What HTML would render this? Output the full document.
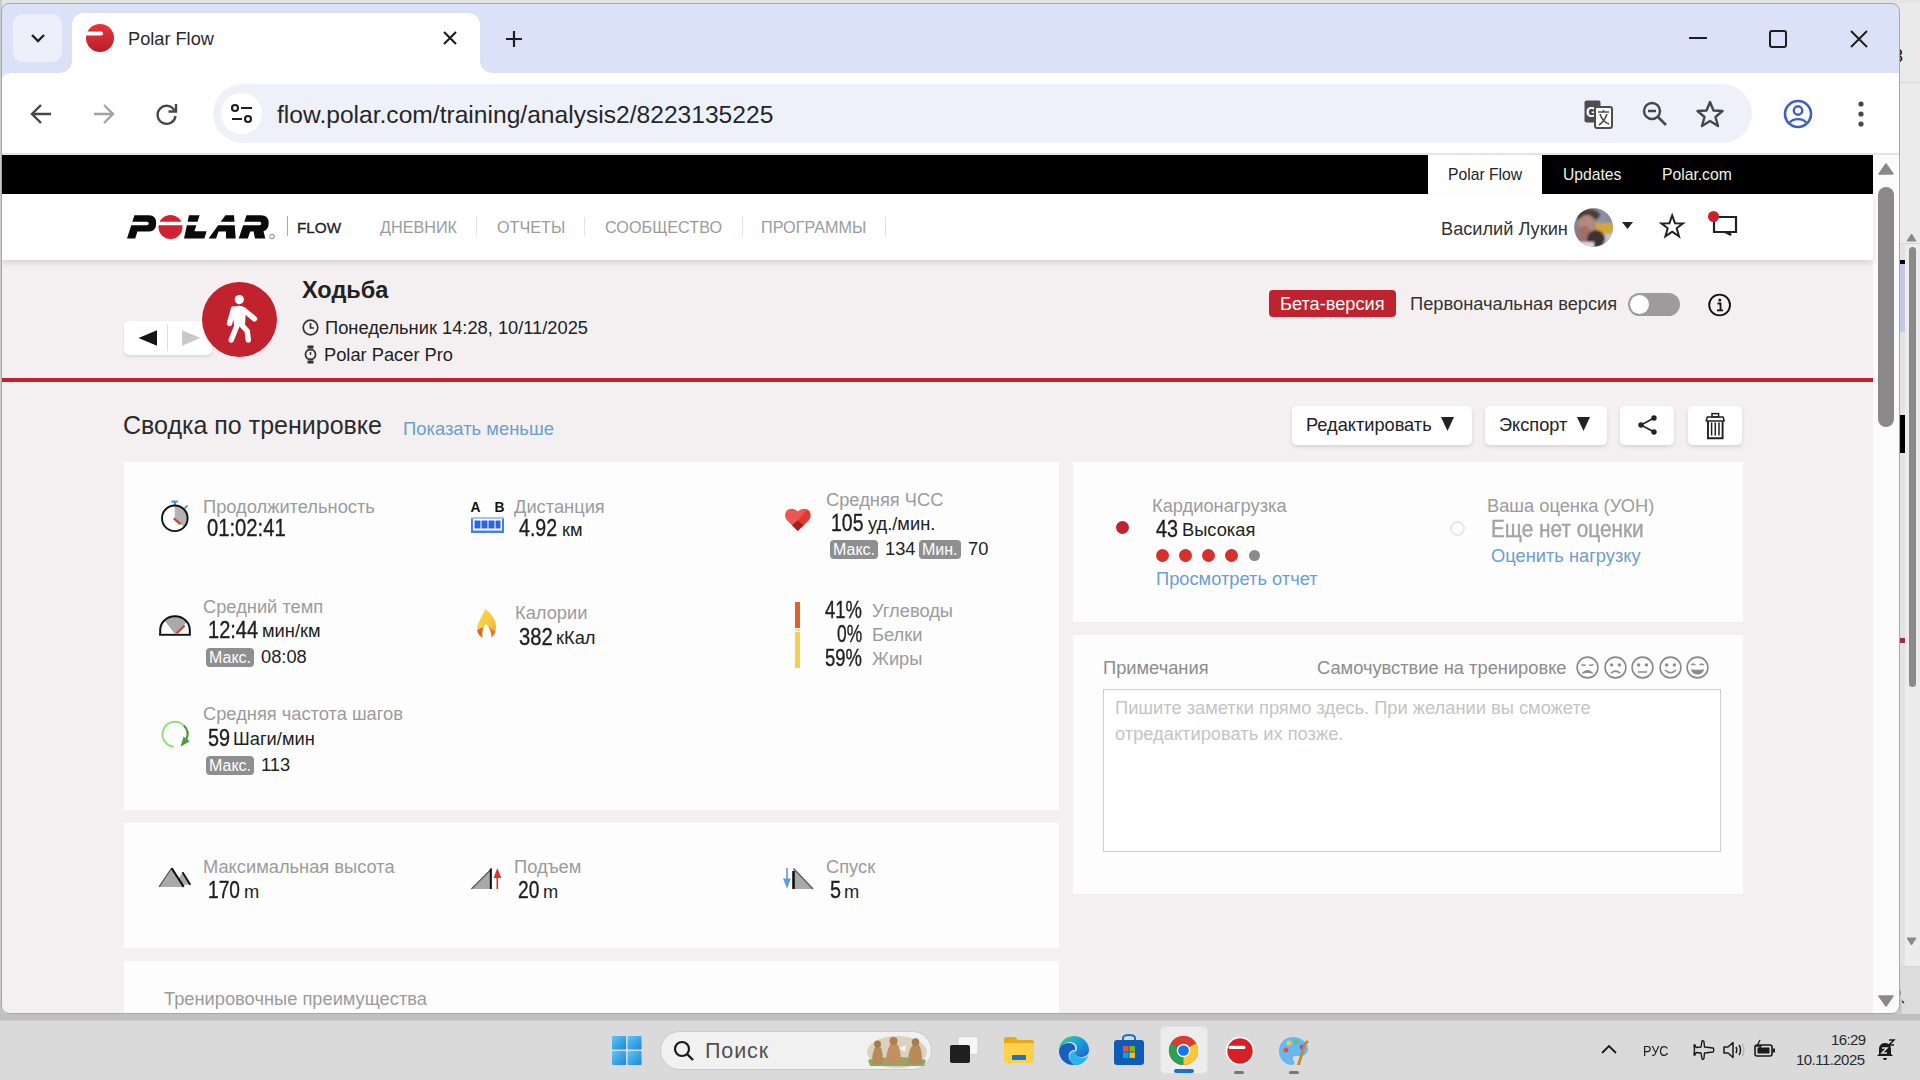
<!DOCTYPE html>
<html><head><meta charset="utf-8">
<style>
*{box-sizing:border-box;margin:0;padding:0}
html,body{width:1920px;height:1080px;overflow:hidden;background:#e8e8e8;font-family:"Liberation Sans",sans-serif}
.a{position:absolute}
.t{position:absolute;white-space:nowrap;line-height:1}
#scr{position:absolute;left:0;top:0;width:1920px;height:1080px;clip-path:inset(3px 21px 66px 1px round 8px)}
.lbl{font-size:18.3px;color:#9b9b9b}
.val{font-size:23.2px;color:#1e1e1e;transform-origin:0 0;transform:scaleX(.92);display:inline-block;-webkit-text-stroke:.35px #1e1e1e}
.unit{font-size:18.3px;color:#222}
.card{position:absolute;background:#fefdfd}
.badge{position:absolute;background:#8f8f8f;color:#fff;border-radius:4px;font-size:16px;line-height:19px;padding:0 3px;white-space:nowrap}
.link{color:#6a9fd0;font-size:18.3px}
svg{position:absolute;overflow:visible}
</style></head><body>
<!-- desktop right strip -->
<div class="a" style="left:1897px;top:0;width:23px;height:1020px;background:#eaeaea"></div>
<div class="a" style="left:1897px;top:82px;width:23px;height:1px;background:#d9d9d9"></div>
<div class="a" style="left:1897px;top:83px;width:23px;height:160px;background:#ebebeb"></div>
<div class="a" style="left:1897px;top:243px;width:23px;height:1px;background:#d5d5d5"></div>
<div class="a" style="left:1897px;top:244px;width:23px;height:722px;background:#e2e2e2"></div>
<div class="a" style="left:1905px;top:244px;width:15px;height:722px;background:#ececec"></div>
<div class="a" style="left:1897px;top:966px;width:23px;height:1px;background:#d5d5d5"></div>
<div class="a" style="left:1897px;top:967px;width:23px;height:53px;background:#dcdcdc"></div>
<svg style="left:1906px;top:233px" width="11" height="9"><path d="M5.5 1L10 8H1Z" fill="#8a8a8a" stroke="#8a8a8a" stroke-linejoin="round"/></svg>
<div class="a" style="left:1909px;top:247px;width:7px;height:440px;border-radius:4px;background:#8a8a8a"></div>
<svg style="left:1906px;top:937px" width="11" height="9"><path d="M1 1H10L5.5 8Z" fill="#8a8a8a" stroke="#8a8a8a" stroke-linejoin="round"/></svg>
<div class="a" style="left:1897px;top:260px;width:8px;height:4px;background:#000"></div>
<div class="a" style="left:1897px;top:264px;width:8px;height:68px;background:#c6c9e6"></div>
<div class="a" style="left:1897px;top:415px;width:8px;height:38px;background:#000"></div>
<div class="a" style="left:1897px;top:638px;width:8px;height:5px;background:#9c2a3a"></div>
<div class="t" style="left:1893px;top:47px;font-size:18px;color:#111">3</div>
<svg style="left:1897px;top:984px" width="10" height="20"><path d="M1 1Q4 8 2 14L7 19" fill="none" stroke="#222" stroke-width="1.3"/></svg>
<div class="a" style="left:0;top:0;width:1920px;height:3px;background:#e4e4e4"></div>
<div class="a" style="left:0;top:0;width:2px;height:1014px;background:#cacaca"></div>
<div class="a" style="left:0;top:998px;width:16px;height:16px;background:#c2c2c2"></div>
<div class="a" style="left:1886px;top:998px;width:16px;height:16px;background:#c8c8c8"></div>
<!-- taskbar -->
<div class="a" style="left:0;top:1014px;width:1920px;height:6px;background:#bfbfbf"></div>
<div class="a" style="left:0;top:1020px;width:1920px;height:60px;background:#dadada;border-top:1px solid #c8c8c8"></div>

<div id="scr">
 <!-- tab strip -->
 <div class="a" style="left:0;top:0;width:1920px;height:73px;background:#dbe2f7"></div>
 <div class="a" style="left:13px;top:14px;width:49px;height:48px;border-radius:10px;background:#edf0fb"></div>
 <svg style="left:30px;top:32px" width="16" height="12"><path d="M2 3 L8 9 L14 3" fill="none" stroke="#1f1f1f" stroke-width="2.4"/></svg>
 <!-- active tab -->
 <div class="a" style="left:72px;top:13px;width:408px;height:62px;background:#fff;border-radius:12px 12px 0 0"></div>
 <div class="a" style="left:60px;top:61px;width:12px;height:12px;background:radial-gradient(circle at 0 0,#dbe2f7 11.5px,#fff 12px)"></div>
 <div class="a" style="left:480px;top:61px;width:12px;height:12px;background:radial-gradient(circle at 100% 0,#dbe2f7 11.5px,#fff 12px)"></div>
 <svg style="left:86px;top:24px" width="28" height="28"><defs><linearGradient id="fv" x1="0" y1="0" x2="0" y2="1"><stop offset="0" stop-color="#e8333a"/><stop offset="1" stop-color="#b8202a"/></linearGradient></defs><circle cx="14" cy="14" r="14" fill="url(#fv)"/><rect x="-1" y="7.5" width="18" height="4" rx="2" fill="#fff"/></svg>
 <div class="t" style="left:128px;top:30px;font-size:18.2px;color:#2a2a2a">Polar Flow</div>
 <svg style="left:443px;top:31px" width="14" height="14"><path d="M1 1L13 13M13 1L1 13" stroke="#1f1f1f" stroke-width="2.2"/></svg>
 <svg style="left:505px;top:30px" width="18" height="18"><path d="M9 1V17M1 9H17" stroke="#1f1f1f" stroke-width="2.2"/></svg>
 <!-- window controls -->
 <div class="a" style="left:1689px;top:37px;width:18px;height:2px;background:#1f1f1f"></div>
 <div class="a" style="left:1769px;top:30px;width:18px;height:18px;border:2px solid #1f1f1f;border-radius:3px"></div>
 <svg style="left:1850px;top:30px" width="18" height="18"><path d="M1 1L17 17M17 1L1 17" stroke="#1f1f1f" stroke-width="2"/></svg>

 <!-- toolbar -->
 <div class="a" style="left:0;top:73px;width:1920px;height:81px;background:#fff;border-radius:12px 12px 0 0"></div>
 <div class="a" style="left:0;top:153px;width:1920px;height:2px;background:#e3e3e3"></div>
 <svg style="left:30px;top:103px" width="22" height="22"><path d="M21 11H3M11 2L2 11L11 20" fill="none" stroke="#474747" stroke-width="2.4"/></svg>
 <svg style="left:93px;top:103px" width="22" height="22"><path d="M1 11H19M11 2L20 11L11 20" fill="none" stroke="#a3a3a3" stroke-width="2.4"/></svg>
 <svg style="left:155px;top:102px" width="24" height="24"><path d="M19.5 8.5A9 9 0 1 0 20.5 14" fill="none" stroke="#474747" stroke-width="2.4"/><path d="M21 2V9.5H13.5" fill="none" stroke="#474747" stroke-width="2.4"/></svg>
 <div class="a" style="left:213px;top:84px;width:1539px;height:59px;border-radius:30px;background:#eef1f9"></div>
 <div class="a" style="left:221px;top:93px;width:41px;height:41px;border-radius:50%;background:#fff"></div>
 <svg style="left:230px;top:102px" width="24" height="24"><circle cx="5" cy="6" r="3" fill="none" stroke="#1f1f1f" stroke-width="2.2"/><path d="M11 6H22M2 17H12" stroke="#1f1f1f" stroke-width="2.2"/><circle cx="18" cy="17" r="3" fill="none" stroke="#1f1f1f" stroke-width="2.2"/></svg>
 <div class="t" style="left:277px;top:102.6px;font-size:24.6px;color:#262626">flow.polar.com/training/analysis2/8223135225</div>
 <!-- translate icon -->
 <svg style="left:1584px;top:100px" width="30" height="30"><rect x="0.5" y="0.5" width="16" height="22" rx="2" fill="#4d4d4d"/><text x="2" y="17" font-family="Liberation Sans" font-weight="700" font-size="14" fill="#fff">G</text><rect x="11" y="7" width="17" height="21" rx="2" fill="#fff" stroke="#4d4d4d" stroke-width="2"/><path d="M14 12H25M19.5 10V12M16 14C18 20 21 23 25 24M23 14C21 20 18 23 15 25" fill="none" stroke="#4d4d4d" stroke-width="1.6"/></svg>
 <svg style="left:1642px;top:101px" width="26" height="26"><circle cx="10" cy="10" r="8" fill="none" stroke="#474747" stroke-width="2.4"/><path d="M6 10H14M16 16L24 24" stroke="#474747" stroke-width="2.6"/></svg>
 <svg style="left:1696px;top:100px" width="28" height="28"><path d="M14 2L17.5 10.5L26.5 11L19.5 17L22 26L14 21L6 26L8.5 17L1.5 11L10.5 10.5Z" fill="none" stroke="#474747" stroke-width="2.4" stroke-linejoin="round"/></svg>
 <svg style="left:1783px;top:99px" width="30" height="30"><circle cx="15" cy="15" r="13" fill="none" stroke="#3a5fc8" stroke-width="2.6"/><circle cx="15" cy="11.5" r="4.2" fill="none" stroke="#3a5fc8" stroke-width="2.4"/><path d="M7 23.5C10 19 20 19 23 23.5" fill="none" stroke="#3a5fc8" stroke-width="2.4"/></svg>
 <svg style="left:1857px;top:101px" width="8" height="26"><circle cx="4" cy="3" r="2.6" fill="#474747"/><circle cx="4" cy="13" r="2.6" fill="#474747"/><circle cx="4" cy="23" r="2.6" fill="#474747"/></svg>

 <!-- page bg -->
 <div class="a" style="left:0;top:155px;width:1873px;height:860px;background:#f4f0f1"></div>
 <!-- scrollbar -->
 <div class="a" style="left:1873px;top:155px;width:27px;height:860px;background:#fcfbfb"></div>
 <svg style="left:1878px;top:163px" width="16" height="12"><path d="M8 1L15 11H1Z" fill="#8a8889" stroke="#8a8889" stroke-width="1.5" stroke-linejoin="round"/></svg>
 <div class="a" style="left:1878px;top:187px;width:16px;height:240px;border-radius:8px;background:#8a8889"></div>
 <svg style="left:1878px;top:995px" width="16" height="12"><path d="M1 1H15L8 11Z" fill="#8a8889" stroke="#8a8889" stroke-width="1.5" stroke-linejoin="round"/></svg>
 <!-- black top bar -->
 <div class="a" style="left:0;top:155px;width:1873px;height:39px;background:#000"></div>
 <div class="a" style="left:1428px;top:155px;width:114px;height:39px;background:#fff"></div>
 <div class="t" style="left:1448px;top:167px;font-size:15.7px;color:#222">Polar Flow</div>
 <div class="t" style="left:1563px;top:167px;font-size:15.7px;color:#f2f0e6">Updates</div>
 <div class="t" style="left:1662px;top:167px;font-size:15.7px;color:#f2f0e6">Polar.com</div>
 <!-- nav -->
 <div class="a" style="left:0;top:194px;width:1873px;height:66px;background:#fff;box-shadow:0 3px 6px rgba(0,0,0,.12)"></div>
 <svg style="left:124px;top:210px" width="160" height="34" viewBox="0 0 160 34">
  <path fill="#0a0a0a" d="M10.4,5.2 H25 Q32.2,5.2 32.2,13.3 Q32.2,21.5 25,21.5 H13.4 L11.2,28.6 H3 Z M65,5.2 H75.6 L70.4,21.3 H82.6 L80.4,28.6 H60 Z M101.4,5.2 H110 L111.7,28.6 H102 V21.5 H94.5 L92,28.6 H84.6 Z M122.5,5.2 H137 Q144.7,5.2 144.7,13 Q144.7,19.8 139.5,21.2 L141.3,28.6 H131 L129.6,21.4 H126.2 L123.8,28.6 H114.7 Z"/>
  <circle cx="46.5" cy="17" r="12" fill="#d0232f"/>
  <path fill="#fff" d="M0,11.7 H23 A1.75,1.75 0 0 1 23,15.2 H0 Z M33,11.7 H135.5 A1.75,1.75 0 0 1 135.5,15.2 H33 Z"/>
  <circle cx="148" cy="26.5" r="2.3" fill="none" stroke="#555" stroke-width=".7"/>
 </svg>
 <div class="a" style="left:287px;top:216px;width:1px;height:20px;background:#aaa"></div>
 <div class="t" style="left:297px;top:219.8px;font-size:15.3px;color:#222;-webkit-text-stroke:.3px #222">FLOW</div>
 <div class="t" style="left:380px;top:219px;font-size:16.2px;color:#9b9b9b">ДНЕВНИК</div>
 <div class="a" style="left:476px;top:217px;width:1px;height:19px;background:#e2e2e2"></div>
 <div class="t" style="left:497px;top:219px;font-size:16.2px;color:#9b9b9b">ОТЧЕТЫ</div>
 <div class="a" style="left:584px;top:217px;width:1px;height:19px;background:#e2e2e2"></div>
 <div class="t" style="left:605px;top:219px;font-size:16.2px;color:#9b9b9b">СООБЩЕСТВО</div>
 <div class="a" style="left:742px;top:217px;width:1px;height:19px;background:#e2e2e2"></div>
 <div class="t" style="left:761px;top:219px;font-size:16.2px;color:#9b9b9b">ПРОГРАММЫ</div>
 <div class="a" style="left:885px;top:217px;width:1px;height:19px;background:#e2e2e2"></div>
 <div class="t" style="left:1441px;top:220px;font-size:18.2px;color:#333">Василий Лукин</div>
 <svg style="left:1574px;top:208px" width="39" height="39" viewBox="0 0 39 39"><defs><clipPath id="avc"><circle cx="19.5" cy="19.5" r="19.3"/></clipPath><filter id="avb" x="-20%" y="-20%" width="140%" height="140%"><feGaussianBlur stdDeviation="1.3"/></filter></defs><g clip-path="url(#avc)"><rect width="39" height="39" fill="#7d8396"/><g filter="url(#avb)"><rect x="22" y="0" width="20" height="16" fill="#8a8fa3"/><rect x="22" y="15" width="20" height="11" fill="#d6a634"/><rect x="24" y="26" width="18" height="14" fill="#c2c6cf"/><ellipse cx="14" cy="7" rx="12" ry="6" fill="#4e3e36"/><ellipse cx="13" cy="17" rx="9" ry="10" fill="#b28a7c"/><ellipse cx="10" cy="26" rx="7" ry="8" fill="#9c6f66"/><ellipse cx="22" cy="31" rx="9" ry="9" fill="#3f3131"/><rect x="0" y="34" width="20" height="6" fill="#d8d8dc"/></g></g></svg>
 <svg style="left:1622px;top:222px" width="12" height="8"><path d="M0 0H11L5.5 7Z" fill="#222"/></svg>
 <svg style="left:1660px;top:214px" width="26" height="25"><path d="M12.2 1.5L15 9.2L23 9.4L16.7 14.3L19 22.3L12.2 17.6L5.4 22.3L7.7 14.3L1.4 9.4L9.4 9.2Z" fill="none" stroke="#222" stroke-width="2" stroke-linejoin="miter"/></svg>
 <svg style="left:1712px;top:212px" width="26" height="26"><path d="M2 5H24V20H16L19 23L13 20H2Z" fill="none" stroke="#222" stroke-width="2.2"/></svg>
 <div class="a" style="left:1708px;top:211px;width:11px;height:11px;border-radius:50%;background:#d21f2e"></div>

 <!-- activity header -->
 <div class="a" style="left:0;top:378px;width:1873px;height:4px;background:#c0232e"></div>
 <div class="a" style="left:124px;top:321px;width:88px;height:34px;background:#fff;border-radius:5px;box-shadow:0 2px 3px rgba(0,0,0,.1)"></div>
 <svg style="left:138px;top:330px" width="20" height="17"><path d="M0.5 8L19 0.3V15.8Z" fill="#151515"/></svg>
 <div class="a" style="left:167px;top:325px;width:1px;height:26px;background:#ddd"></div>
 <svg style="left:181px;top:330px" width="20" height="17"><path d="M19.5 8L1 0.3V15.8Z" fill="#c9c9c9"/></svg>
 <div class="a" style="left:202px;top:282px;width:75px;height:75px;border-radius:50%;background:#c0232e"></div>
 <svg style="left:200px;top:280px" width="80" height="80" viewBox="0 0 80 80"><circle cx="39.3" cy="19.6" r="4.6" fill="#fff"/><path d="M33.5 29L29.5 43.5M44.5 30.5L54.5 38.8M36.8 46L31.2 60M41.8 45L47.2 51L48.3 60" fill="none" stroke="#fff" stroke-width="5.4" stroke-linecap="round" stroke-linejoin="round"/><path d="M33 28.5Q39 25 45 28.5L44 45.5H35Z" fill="#fff" stroke="#fff" stroke-width="2" stroke-linejoin="round"/></svg>
 <div class="t" style="left:302px;top:279px;font-size:23.5px;font-weight:700;color:#222">Ходьба</div>
 <svg style="left:302px;top:319px" width="17" height="17"><circle cx="8.5" cy="8.5" r="7.3" fill="none" stroke="#333" stroke-width="1.7"/><path d="M8.5 4V9H12" fill="none" stroke="#333" stroke-width="1.7"/></svg>
 <div class="t" style="left:325px;top:318.6px;font-size:18.3px;color:#222">Понедельник 14:28, 10/11/2025</div>
 <svg style="left:304px;top:345px" width="13" height="19"><rect x="3.5" y="0.5" width="6" height="3" fill="#333"/><rect x="3.5" y="15.5" width="6" height="3" fill="#333"/><circle cx="6.5" cy="9.5" r="5" fill="none" stroke="#333" stroke-width="1.8"/><path d="M6.5 7V10" stroke="#333" stroke-width="1.5"/></svg>
 <div class="t" style="left:324px;top:346px;font-size:18.3px;color:#222">Polar Pacer Pro</div>
 <div class="a" style="left:1269px;top:290px;width:127px;height:27px;border-radius:4px;background:#c0232e"></div>
 <div class="t" style="left:1280px;top:295px;font-size:18.2px;color:#fff">Бета-версия</div>
 <div class="t" style="left:1410px;top:295px;font-size:18.3px;color:#333">Первоначальная версия</div>
 <div class="a" style="left:1628px;top:293px;width:52px;height:23px;border-radius:12px;background:#9c9c9c"></div>
 <div class="a" style="left:1630px;top:295px;width:19px;height:19px;border-radius:50%;background:#fff"></div>
 <svg style="left:1707px;top:293px" width="26" height="26"><circle cx="12.6" cy="12" r="10.4" fill="none" stroke="#111" stroke-width="1.9"/><circle cx="12.8" cy="7" r="1.5" fill="#111"/><path d="M10.5 10.5H13.5V17M10 17.3H16" fill="none" stroke="#111" stroke-width="1.8"/></svg>


 <!-- summary header -->
 <div class="t" style="left:123px;top:413px;font-size:25px;color:#2b2b2b">Сводка по тренировке</div>
 <div class="t link" style="left:403px;top:419.5px;font-size:18.4px">Показать меньше</div>
 <div class="a" style="left:1292px;top:406px;width:180px;height:39px;border-radius:5px;background:#fff;box-shadow:0 2px 4px rgba(0,0,0,.12)"></div>
 <div class="t" style="left:1306px;top:415.5px;font-size:18.2px;color:#222">Редактировать</div>
 <svg style="left:1441px;top:417px" width="14" height="15"><path d="M0 0H13L6.5 14Z" fill="#222"/></svg>
 <div class="a" style="left:1485px;top:406px;width:122px;height:39px;border-radius:5px;background:#fff;box-shadow:0 2px 4px rgba(0,0,0,.12)"></div>
 <div class="t" style="left:1499px;top:415.5px;font-size:18.2px;color:#222">Экспорт</div>
 <svg style="left:1577px;top:417px" width="14" height="15"><path d="M0 0H13L6.5 14Z" fill="#222"/></svg>
 <div class="a" style="left:1620px;top:406px;width:54px;height:39px;border-radius:5px;background:#fff;box-shadow:0 2px 4px rgba(0,0,0,.12)"></div>
 <svg style="left:1637px;top:414px" width="22" height="22"><path d="M17 4L4 11L17 18" fill="none" stroke="#222" stroke-width="1.6"/><circle cx="17" cy="4" r="2.7" fill="#222"/><circle cx="4" cy="11" r="2.7" fill="#222"/><circle cx="17" cy="18" r="2.7" fill="#222"/></svg>
 <div class="a" style="left:1688px;top:406px;width:54px;height:39px;border-radius:5px;background:#fff;box-shadow:0 2px 4px rgba(0,0,0,.12)"></div>
 <svg style="left:1704px;top:412px" width="24" height="28" viewBox="0 0 24 28"><rect x="8" y="1.6" width="6.6" height="3.4" fill="none" stroke="#222" stroke-width="1.5"/><path d="M2.2 9L3.3 5H19.1L20.2 9Z" fill="none" stroke="#222" stroke-width="1.5" stroke-linejoin="round"/><path d="M4 9.2V26.2H18.6V9.2" fill="none" stroke="#222" stroke-width="1.9"/><path d="M7.6 10.5V23.5M11.3 10.5V23.5M15 10.5V23.5" stroke="#222" stroke-width="1.5"/></svg>

 <!-- cards -->
 <div class="card" style="left:124px;top:462px;width:935px;height:348px"></div>
 <div class="card" style="left:124px;top:823px;width:935px;height:125px"></div>
 <div class="card" style="left:124px;top:961px;width:935px;height:60px"></div>
 <div class="card" style="left:1073px;top:462px;width:670px;height:160px"></div>
 <div class="card" style="left:1073px;top:635px;width:670px;height:259px"></div>

 <!-- duration -->
 <svg style="left:152px;top:494px" width="48" height="46" viewBox="0 0 48 46"><path d="M19.5 7.6H25.8" stroke="#5b9bd5" stroke-width="2.3"/><path d="M22.8 8V11.5" stroke="#3f6f9a" stroke-width="1.6"/><path d="M32.5 14.5L35.5 11.5" stroke="#5b9bd5" stroke-width="1.8"/><path d="M22.8 24.3V11.5 A12.8 12.8 0 0 1 31.85 33.35Z" fill="#b3b3b3"/><circle cx="22.8" cy="24.3" r="12.8" fill="none" stroke="#111" stroke-width="1.9"/><path d="M21.8 24.3L28.5 30.2" stroke="#c9453b" stroke-width="2.4"/></svg>
 <div class="t lbl" style="left:203px;top:497.6px">Продолжительность</div>
 <div class="t" style="left:207px;top:517.4px"><span class="val" style="transform:scaleX(0.872)">01:02:41</span></div>

 <!-- distance -->
 <div class="t" style="left:470.5px;top:500.5px;font-size:13.8px;font-weight:700;color:#111">A</div>
 <div class="t" style="left:494.5px;top:500.5px;font-size:13.8px;font-weight:700;color:#111">B</div>
 <svg style="left:471px;top:517px" width="33" height="16" viewBox="0 0 33 16"><rect x="0" y="0" width="33" height="16" fill="#4a7de0"/><rect x="0" y="0" width="33" height="2" fill="#a8c2f0"/><rect x="2" y="2" width="29" height="11.5" fill="#fff"/><rect x="3.5" y="3.5" width="6" height="8" fill="#2f63d6"/><rect x="10.5" y="3.5" width="6" height="8" fill="#2f63d6"/><rect x="17.5" y="3.5" width="6" height="8" fill="#2f63d6"/><rect x="24.5" y="3.5" width="5" height="8" fill="#2f63d6"/></svg>
 <div class="t lbl" style="left:514px;top:497.6px">Дистанция</div>
 <div class="t" style="left:519px;top:517.4px"><span class="val" style="transform:scaleX(0.844)">4.92</span></div>
 <div class="t unit" style="left:562px;top:520.7px">км</div>

 <!-- HR -->
 <svg style="left:780px;top:502px" width="36" height="34" viewBox="0 0 36 34"><defs><clipPath id="hc"><path d="M17.8 29L7.2 18.6C4.2 15.6 4.4 10.2 7.8 7.8C11 5.8 15 6.6 17.8 9.4C20.6 6.6 24.6 5.8 27.8 7.8C31.2 10.2 31.4 15.6 28.4 18.6Z"/></clipPath></defs><g clip-path="url(#hc)"><rect width="36" height="34" fill="#ea5751"/><path d="M29 6L40 6V34H26L17.6 18.6Z" fill="#e3392a"/><path d="M17.6 18.6L25 24.4L17.8 32L10.6 24.4Z" fill="#a91f1d"/></g></svg>
 <div class="t lbl" style="left:826px;top:490.5px">Средняя ЧСС</div>
 <div class="t" style="left:831px;top:511.8px"><span class="val" style="transform:scaleX(0.839)">105</span></div>
 <div class="t unit" style="left:868px;top:515.2px">уд./мин.</div>
 <div class="badge" style="left:830px;top:540px">Макс.</div>
 <div class="t" style="left:885px;top:540px;font-size:18.3px;color:#222">134</div>
 <div class="badge" style="left:919px;top:540px">Мин.</div>
 <div class="t" style="left:968px;top:540px;font-size:18.3px;color:#222">70</div>

 <!-- pace -->
 <svg style="left:152px;top:605px" width="48" height="40" viewBox="0 0 48 40"><defs><clipPath id="spc"><path d="M8.2 29.8V25A14.8 13.8 0 0 1 37.8 25V29.8Z"/></clipPath></defs><path clip-path="url(#spc)" d="M23 29L35.02 16.98A17 17 0 0 0 12.53 15.60Z" fill="#a9a9a9"/><path d="M8.2 30V25A14.8 13.8 0 0 1 37.8 25V30" fill="none" stroke="#111" stroke-width="2"/><path d="M7.2 29.8H38.8" stroke="#111" stroke-width="1.9"/><path d="M24.5 28.6L32.6 20.4" stroke="#c9453b" stroke-width="2.2"/></svg>
 <div class="t lbl" style="left:203px;top:597.8px">Средний темп</div>
 <div class="t" style="left:208px;top:619px"><span class="val" style="transform:scaleX(0.863)">12:44</span></div>
 <div class="t unit" style="left:262px;top:622.3px">мин/км</div>
 <div class="badge" style="left:206px;top:648px">Макс.</div>
 <div class="t" style="left:261px;top:648px;font-size:18.3px;color:#222">08:08</div>

 <!-- calories -->
 <svg style="left:466px;top:600px" width="40" height="45" viewBox="0 0 40 45"><defs><linearGradient id="fg" x1="0" y1="0" x2="1" y2="1"><stop offset="0" stop-color="#fbd94a"/><stop offset=".55" stop-color="#f7c940"/><stop offset="1" stop-color="#eea63c"/></linearGradient></defs><path d="M19.2 9C17 16 11 22 11 30C11 33 13.5 36 16.7 37.5C15.5 34 16.5 27 20 24C23.5 27 26 33 25 37.5C28.5 35 30 31 30 27C30 20 25 13 19.2 9Z" fill="url(#fg)"/><path d="M11.3 31C12 34 14 36.5 16.7 37.5C15.8 34.5 16 31 17.5 27.5C14 28 12 29.5 11.3 31Z" fill="#d8692f"/><path d="M20.3 24C22.5 26 24.5 29.5 25 33C26 34.5 25.5 36.5 25 37.5C27.5 36 29 33.5 29.6 31.5C26.5 30 23.5 28 20.3 24Z" fill="#dc7a35"/></svg>
 <div class="t lbl" style="left:515px;top:604.2px">Калории</div>
 <div class="t" style="left:519px;top:625.9px"><span class="val" style="transform:scaleX(0.872)">382</span></div>
 <div class="t unit" style="left:556px;top:629.1px">кКал</div>

 <!-- nutrition -->
 <div class="a" style="left:795px;top:602px;width:5px;height:26px;background:#e0602a"></div>
 <div class="a" style="left:795px;top:629px;width:5px;height:2px;background:#f5d9a8"></div>
 <div class="a" style="left:795px;top:632px;width:5px;height:36px;background:#f3d04e"></div>
 <div class="t" style="left:824.7px;top:599.2px"><span class="val" style="transform:scaleX(0.796)">41%</span></div>
 <div class="t lbl" style="left:872px;top:602px">Углеводы</div>
 <div class="t" style="left:836.6px;top:622.6px"><span class="val" style="transform:scaleX(0.749)">0%</span></div>
 <div class="t lbl" style="left:872px;top:626.2px">Белки</div>
 <div class="t" style="left:824.7px;top:646.6px"><span class="val" style="transform:scaleX(0.796)">59%</span></div>
 <div class="t lbl" style="left:872px;top:650px">Жиры</div>

 <!-- cadence -->
 <svg style="left:152px;top:712px" width="48" height="40" viewBox="0 0 48 40"><path d="M21.91 34.75A12.5 12.5 0 1 1 31.84 13.46" fill="none" stroke="#8fe07e" stroke-width="2"/><path d="M31.84 13.46A12.5 12.5 0 0 1 34.59 26.98" fill="none" stroke="#4f9a3e" stroke-width="2.2"/><path d="M31.5 24.4L37.8 29.3L28.5 34.8Z" fill="#4e9e3c"/></svg>
 <div class="t lbl" style="left:203px;top:705.3px">Средняя частота шагов</div>
 <div class="t" style="left:208px;top:727px"><span class="val" style="transform:scaleX(0.853)">59</span></div>
 <div class="t unit" style="left:233px;top:730.2px">Шаги/мин</div>
 <div class="badge" style="left:206px;top:756px">Макс.</div>
 <div class="t" style="left:261px;top:756px;font-size:18.3px;color:#222">113</div>

 <!-- altitude -->
 <svg style="left:150px;top:855px" width="50" height="40" viewBox="0 0 50 40"><path d="M32.5 17.2L40.3 29.7H25Z" fill="#a9a9a9"/><path d="M32.5 17.2L40.3 29.7" stroke="#111" stroke-width="1.9"/><path d="M21.6 13.1L9 31.9H33.75Z" fill="#a9a9a9"/><path d="M21.6 13.1L9 31.9" stroke="#555" stroke-width="1.1"/><path d="M21.6 13.1L33.75 31.9" stroke="#111" stroke-width="2"/></svg>
 <div class="t lbl" style="left:203px;top:857.8px">Максимальная высота</div>
 <div class="t" style="left:208px;top:879.4px"><span class="val" style="transform:scaleX(0.825)">170</span></div>
 <div class="t unit" style="left:244px;top:883px">m</div>
 <svg style="left:462px;top:855px" width="50" height="40" viewBox="0 0 50 40"><path d="M9.4 34L29.7 13.75V34Z" fill="#a9a9a9"/><path d="M9.4 34L29.7 13.75" stroke="#555" stroke-width="1.2"/><path d="M28.8 13.5V34" stroke="#111" stroke-width="2"/><path d="M35.3 22V34" stroke="#d9342b" stroke-width="1.6"/><path d="M35.3 13L39.4 23H31.6Z" fill="#e0342b"/></svg>
 <div class="t lbl" style="left:514px;top:857.8px">Подъем</div>
 <div class="t" style="left:518px;top:879.4px"><span class="val" style="transform:scaleX(0.825)">20</span></div>
 <div class="t unit" style="left:543px;top:883px">m</div>
 <svg style="left:774px;top:855px" width="50" height="40" viewBox="0 0 50 40"><path d="M19.5 34V13.4L39 34Z" fill="#a9a9a9"/><path d="M19.5 13.4L39 34" stroke="#555" stroke-width="1.3"/><path d="M19.5 16V34" stroke="#111" stroke-width="2.6"/><path d="M13 13V25" stroke="#5a9be0" stroke-width="1.6"/><path d="M13 33.75L16.9 23.4H9Z" fill="#5a9be0"/></svg>
 <div class="t lbl" style="left:826px;top:857.8px">Спуск</div>
 <div class="t" style="left:830px;top:879.4px"><span class="val" style="transform:scaleX(0.853)">5</span></div>
 <div class="t unit" style="left:844px;top:883px">m</div>

 <div class="t lbl" style="left:164px;top:990px">Тренировочные преимущества</div>

 <!-- cardio load -->
 <div class="a" style="left:1116px;top:521px;width:13px;height:13px;border-radius:50%;background:#c0232e"></div>
 <div class="t lbl" style="left:1152px;top:497.1px">Кардионагрузка</div>
 <div class="t" style="left:1156px;top:518px"><span class="val" style="transform:scaleX(0.853)">43</span></div>
 <div class="t unit" style="left:1182px;top:521px">Высокая</div>
 <div class="a" style="left:1156px;top:549px;width:13px;height:13px;border-radius:50%;background:#d6302a"></div>
 <div class="a" style="left:1179px;top:549px;width:13px;height:13px;border-radius:50%;background:#d6302a"></div>
 <div class="a" style="left:1202px;top:549px;width:13px;height:13px;border-radius:50%;background:#d6302a"></div>
 <div class="a" style="left:1225px;top:549px;width:13px;height:13px;border-radius:50%;background:#d6302a"></div>
 <div class="a" style="left:1249px;top:550px;width:11px;height:11px;border-radius:50%;background:#8a8a8a"></div>
 <div class="t link" style="left:1156px;top:570.3px">Просмотреть отчет</div>
 <div class="a" style="left:1450px;top:521px;width:15px;height:15px;border-radius:50%;border:2px solid #e6e6e6"></div>
 <div class="t lbl" style="left:1487px;top:496.5px">Ваша оценка (УОН)</div>
 <div class="t" style="left:1491px;top:518px"><span class="val" style="color:#a3a3a3;-webkit-text-stroke:.4px #a3a3a3;transform:scaleX(0.896)">Еще нет оценки</span></div>
 <div class="t link" style="left:1491px;top:547px">Оценить нагрузку</div>

 <!-- notes -->
 <div class="t lbl" style="left:1103px;top:659.2px;color:#8c8c8c">Примечания</div>
 <div class="t lbl" style="left:1317px;top:659.2px;color:#8c8c8c">Самочувствие на тренировке</div>
 <svg style="left:1575.9px;top:656.3px" width="23" height="23" viewBox="0 0 23 23"><circle cx="11.5" cy="11.5" r="10.4" fill="none" stroke="#8a8a8a" stroke-width="1.6"/><path d="M5.6 8.2Q7.5 10.2 9.5 8.6M13.5 8.6Q15.5 10.2 17.4 8.2" fill="none" stroke="#8a8a8a" stroke-width="1.5"/><path d="M6.5 17.2Q11.5 11.8 16.5 17.2Q11.5 15.2 6.5 17.2Z" fill="#8a8a8a" stroke="#8a8a8a" stroke-width="1.2" stroke-linejoin="round"/></svg>
<svg style="left:1603.5px;top:656.3px" width="23" height="23" viewBox="0 0 23 23"><circle cx="11.5" cy="11.5" r="10.4" fill="none" stroke="#8a8a8a" stroke-width="1.6"/><circle cx="7.6" cy="8.9" r="1.6" fill="#8a8a8a"/><circle cx="15.4" cy="8.9" r="1.6" fill="#8a8a8a"/><path d="M6.8 17.3Q11.5 13 16.2 17.3" fill="none" stroke="#8a8a8a" stroke-width="1.5"/></svg>
<svg style="left:1630.9px;top:656.3px" width="23" height="23" viewBox="0 0 23 23"><circle cx="11.5" cy="11.5" r="10.4" fill="none" stroke="#8a8a8a" stroke-width="1.6"/><circle cx="7.6" cy="8.9" r="1.7" fill="#8a8a8a"/><circle cx="15.4" cy="8.9" r="1.7" fill="#8a8a8a"/><path d="M7 16H16" stroke="#8a8a8a" stroke-width="1.5"/></svg>
<svg style="left:1658.5px;top:656.3px" width="23" height="23" viewBox="0 0 23 23"><circle cx="11.5" cy="11.5" r="10.4" fill="none" stroke="#8a8a8a" stroke-width="1.6"/><circle cx="7.6" cy="8.9" r="1.7" fill="#8a8a8a"/><circle cx="15.4" cy="8.9" r="1.7" fill="#8a8a8a"/><path d="M6 14Q11.5 19.5 17 14" fill="none" stroke="#8a8a8a" stroke-width="1.5"/></svg>
<svg style="left:1686.2px;top:656.3px" width="23" height="23" viewBox="0 0 23 23"><circle cx="11.5" cy="11.5" r="10.4" fill="none" stroke="#8a8a8a" stroke-width="1.6"/><path d="M5.3 9.2Q7.3 6.6 9.3 9.2M13.7 9.2Q15.7 6.6 17.7 9.2" fill="none" stroke="#8a8a8a" stroke-width="1.5"/><path d="M4.8 13.2Q11.5 14.5 18.2 13.2Q16.5 18.6 11.5 18.6Q6.5 18.6 4.8 13.2Z" fill="#8a8a8a"/></svg>
 <div class="a" style="left:1103px;top:689px;width:618px;height:163px;border:1px solid #cfcfcf;background:#fff"></div>
 <div class="a" style="left:1115px;top:694.6px;font-size:18.3px;line-height:26px;color:#c4c4c4;white-space:nowrap">Пишите заметки прямо здесь. При желании вы сможете<br>отредактировать их позже.</div>


</div>
<!-- window border -->
<div class="a" style="left:1px;top:3px;width:1899px;height:1011px;border:1px solid #a8a8a8;border-radius:8px"></div>
<!-- taskbar icons -->
<svg style="left:612px;top:1036px" width="30" height="29" viewBox="0 0 30 29"><defs><linearGradient id="wl" x1="0" y1="0" x2="1" y2="1"><stop offset="0" stop-color="#5fc7f8"/><stop offset="1" stop-color="#1a86d8"/></linearGradient></defs><rect x="0" y="0" width="14" height="13.5" rx="1" fill="url(#wl)"/><rect x="15.5" y="0" width="14" height="13.5" rx="1" fill="url(#wl)"/><rect x="0" y="15" width="14" height="14" rx="1" fill="url(#wl)"/><rect x="15.5" y="15" width="14" height="14" rx="1" fill="url(#wl)"/></svg>
<div class="a" style="left:660px;top:1031px;width:272px;height:39px;border-radius:20px;background:#f1f1f1;border:1px solid #c9c9c9"></div>
<svg style="left:673px;top:1040px" width="22" height="22"><circle cx="9" cy="9" r="7" fill="none" stroke="#1a1a1a" stroke-width="2.2"/><path d="M14 14L20 20" stroke="#1a1a1a" stroke-width="2.4"/></svg>
<div class="t" style="left:705px;top:1040.5px;font-size:21.5px;color:#505050;letter-spacing:.9px">Поиск</div>
<svg style="left:866px;top:1034px" width="62" height="34" viewBox="0 0 62 34"><ellipse cx="31" cy="18" rx="30" ry="16" fill="#d9d2c0"/><path d="M2 26C15 22 45 22 60 26L58 32H4Z" fill="#8fa865"/><path d="M6 30C6 20 8 12 12 11C16 12 17 20 17 30Z" fill="#b88a55"/><circle cx="11.5" cy="10" r="3.5" fill="#a87a48"/><path d="M20 30C20 18 23 9 28 8C33 9 35 18 35 30Z" fill="#c09060"/><circle cx="27.5" cy="7" r="4" fill="#b0804c"/><path d="M42 30C42 18 45 10 50 9C55 10 56 18 56 30Z" fill="#b88a55"/><circle cx="49.5" cy="8" r="3.8" fill="#a87a48"/><path d="M33 14L40 11L39 18Z" fill="#f4f4f4"/></svg>
<svg style="left:949px;top:1036px" width="30" height="28" viewBox="0 0 30 28"><rect x="9" y="0.5" width="20" height="18" rx="2" fill="#f5f5f5" stroke="#cfcfcf"/><rect x="1" y="9" width="20" height="18" rx="2" fill="#1f1f1f"/></svg>
<svg style="left:1003px;top:1036px" width="32" height="28" viewBox="0 0 32 28"><path d="M1 3C1 2 2 1 3 1H12L15 4H29C30 4 31 5 31 6V10H1Z" fill="#e9a913"/><rect x="1" y="7" width="30" height="20" rx="2" fill="#fcd24b"/><rect x="9" y="19" width="14" height="5" rx="1" fill="#1d6fd0"/></svg>
<svg style="left:1058px;top:1035px" width="32" height="32" viewBox="0 0 32 32"><defs><linearGradient id="eg" x1="0" y1="0" x2="1" y2="1"><stop offset="0" stop-color="#3dd17f"/><stop offset=".5" stop-color="#1aa0e0"/><stop offset="1" stop-color="#1c5fc8"/></linearGradient></defs><path d="M16 1C24 1 31 7 31 15C31 20 27 22 23 22C19 22 17 20 17 18C17 16 19 16 19 13C19 9 15 7 12 7C6 7 2 12 1 16C1 7 8 1 16 1Z" fill="url(#eg)"/><path d="M1 16C2 10 7 8 11 8C15 8 18 11 17 15C9 15 8 25 17 30C8 31 1 24 1 16Z" fill="#1560c0"/><path d="M17 30C9 26 10 17 17 16C16 22 24 25 30 21C28 27 22 31 17 30Z" fill="#2cb3e8"/></svg>
<svg style="left:1113px;top:1034px" width="32" height="32" viewBox="0 0 32 32"><path d="M10 6V4C10 2 12 1 16 1C20 1 22 2 22 4V6" fill="none" stroke="#1e6fce" stroke-width="2"/><rect x="1" y="6" width="30" height="25" rx="3" fill="#0f5cb8"/><rect x="10" y="12" width="5.5" height="5.5" fill="#f25022"/><rect x="16.5" y="12" width="5.5" height="5.5" fill="#7fba00"/><rect x="10" y="18.5" width="5.5" height="5.5" fill="#00a4ef"/><rect x="16.5" y="18.5" width="5.5" height="5.5" fill="#ffb900"/></svg>
<div class="a" style="left:1160px;top:1026px;width:48px;height:48px;border-radius:5px;background:#ececec;border:1px solid #e0e0e0"></div>
<svg style="left:1168px;top:1035px" width="31" height="31" viewBox="0 0 32 32"><circle cx="16" cy="16" r="15" fill="#db3b2e"/><path d="M16 16L3 8.5A15 15 0 0 0 16 31Z" fill="#2aa052"/><path d="M16 16L16 31A15 15 0 0 0 29 8.5Z" fill="#fcc934"/><path d="M3 8.5A15 15 0 0 1 29 8.5H16Z" fill="#db3b2e"/><circle cx="16" cy="16" r="7" fill="#fff"/><circle cx="16" cy="16" r="5.5" fill="#1a73e8"/></svg>
<div class="a" style="left:1174px;top:1069px;width:20px;height:4px;border-radius:2px;background:#1a6fd8"></div>
<svg style="left:1225px;top:1036px" width="30" height="30" viewBox="0 0 30 30"><circle cx="15" cy="15" r="13.5" fill="#d91f26" stroke="#fff" stroke-width="1.6"/><rect x="3.5" y="9.8" width="17" height="3.2" rx="1.6" fill="#fff"/></svg>
<div class="a" style="left:1234px;top:1071px;width:10px;height:3px;border-radius:2px;background:#777"></div>
<svg style="left:1278px;top:1035px" width="32" height="32" viewBox="0 0 32 32"><path d="M15 2C7 2 1 8 1 16C1 24 7 30 14 30C17 30 17 27 15 25C14 23 15 21 18 21H22C27 21 30 18 30 14C30 7 23 2 15 2Z" fill="#6ab7f0"/><circle cx="8" cy="15" r="2.5" fill="#e94c3d"/><circle cx="11" cy="8" r="2.5" fill="#f7c64b"/><circle cx="18" cy="7" r="2.5" fill="#5fc36a"/><circle cx="24" cy="12" r="2.5" fill="#8d59c8"/><path d="M26 8L29 5L31 7L28 10L22 30H19Z" fill="#c9872e"/></svg>
<div class="a" style="left:1289px;top:1071px;width:10px;height:3px;border-radius:2px;background:#777"></div>
<!-- tray -->
<svg style="left:1601px;top:1044px" width="16" height="10"><path d="M1 9L8 2L15 9" fill="none" stroke="#1a1a1a" stroke-width="1.8"/></svg>
<div class="t" style="left:1643px;top:1043px;font-size:15.5px;color:#1a1a1a;transform:scaleX(.82);transform-origin:0 0">РУС</div>
<svg style="left:1693px;top:1040px" width="22" height="20" viewBox="0 0 22 20"><path d="M9 1C10 0.5 11 1 11 2L11.5 7L20 8C21 8.5 21 11.5 20 12L11.5 13L11 18C11 19 10 19.5 9 19L8 13L3 12.5L2 15H1L1.5 10L1 5H2L3 7.5L8 7Z" fill="none" stroke="#1a1a1a" stroke-width="1.4" stroke-linejoin="round"/></svg>
<svg style="left:1723px;top:1041px" width="22" height="18" viewBox="0 0 22 18"><path d="M1 6H5L10 1.5V16.5L5 12H1Z" fill="none" stroke="#1a1a1a" stroke-width="1.5" stroke-linejoin="round"/><path d="M13 6C14 7.5 14 10.5 13 12M16 4C18 6.5 18 11.5 16 14" fill="none" stroke="#1a1a1a" stroke-width="1.5"/><path d="M19 2.5C21.5 6 21.5 12 19 15.5" fill="none" stroke="#b5b5b5" stroke-width="1.3"/></svg>
<svg style="left:1754px;top:1040px" width="22" height="18" viewBox="0 0 22 18"><rect x="1" y="5" width="17" height="11" rx="2" fill="none" stroke="#1a1a1a" stroke-width="1.6"/><rect x="3.5" y="7.5" width="12" height="6" fill="#1a1a1a"/><rect x="18.5" y="8.5" width="2.5" height="4" fill="#1a1a1a"/><path d="M6 0L3 6H7L4 11" fill="none" stroke="#1a1a1a" stroke-width="1.3"/></svg>
<div class="t" style="left:1831px;top:1032px;font-size:15px;color:#2a2a2a;letter-spacing:-.6px">16:29</div>
<div class="t" style="left:1796px;top:1051.5px;font-size:15px;color:#2a2a2a;letter-spacing:-.55px">10.11.2025</div>
<svg style="left:1876px;top:1039px" width="20" height="22" viewBox="0 0 20 22"><path d="M9 4C5 4 3 7 3 10V15L1 17H17L15 15V10C15 7 13 4 9 4Z" fill="#1a1a1a"/><path d="M7 19H11C11 20.5 10 21 9 21C8 21 7 20.5 7 19Z" fill="#1a1a1a"/><path d="M6 9H11L6 14H11" fill="none" stroke="#dadada" stroke-width="1.5"/><path d="M13 1H18L13 6H18" fill="none" stroke="#1a1a1a" stroke-width="1.5"/></svg>
<!-- desktop partial at right -->


</body></html>
